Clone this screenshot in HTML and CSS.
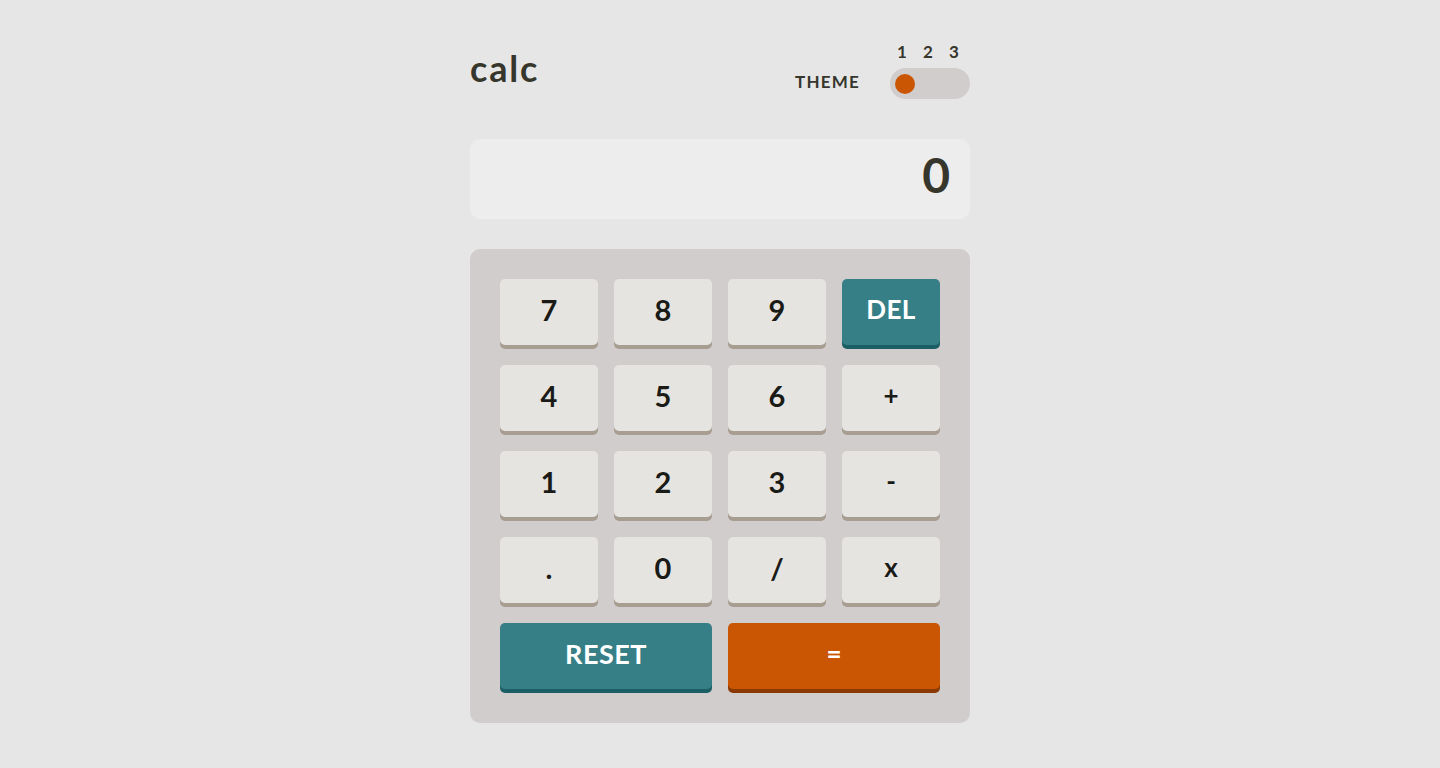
FILE: index.html
```html
<!DOCTYPE html>
<html lang="en">
<head>
<meta charset="utf-8">
<title>calc</title>
<link rel="stylesheet" href="styles.css">
</head>
<body>
<main class="calc">
  <header class="header">
    <h1 class="logo">calc</h1>
    <div class="theme">
      <span class="theme-label">THEME</span>
      <div class="switch">
        <div class="switch-nums"><span>1</span><span>2</span><span>3</span></div>
        <div class="switch-track"><span class="switch-knob"></span></div>
      </div>
    </div>
  </header>
  <section class="display">0</section>
  <section class="keypad">
    <button class="key">7</button>
    <button class="key">8</button>
    <button class="key">9</button>
    <button class="key key-alt key-small">DEL</button>
    <button class="key">4</button>
    <button class="key">5</button>
    <button class="key">6</button>
    <button class="key key-op">+</button>
    <button class="key">1</button>
    <button class="key">2</button>
    <button class="key">3</button>
    <button class="key key-op">-</button>
    <button class="key">.</button>
    <button class="key">0</button>
    <button class="key">/</button>
    <button class="key key-op">x</button>
    <button class="key key-alt key-wide key-reset">RESET</button>
    <button class="key key-eq key-wide">=</button>
  </section>
</main>
</body>
</html>
```
FILE: styles.css
```css
* { box-sizing: border-box; }
html, body { margin: 0; padding: 0; }
body {
  background: #e6e6e6;
  font-family: "Lato", "Liberation Sans", sans-serif;
  font-weight: 700;
  color: #36362c;
  height: 768px;
  overflow: hidden;
}
.calc {
  width: 500px;
  margin: 40px auto 0;
}
.header {
  display: flex;
  justify-content: space-between;
  align-items: flex-end;
  height: 59px;
}
.logo {
  margin: 0 0 13px 0;
  font-size: 36px;
  line-height: 36px;
  font-weight: 700;
  color: #36362c;
  letter-spacing: 1.8px;
}
.theme {
  display: flex;
  align-items: flex-end;
  gap: 30px;
}
.theme-label {
  font-size: 17px;
  line-height: 17px;
  letter-spacing: 1.2px;
  margin-bottom: 9px;
}
.switch {
  display: flex;
  flex-direction: column;
  width: 80px;
  gap: 10px;
}
.switch-nums {
  display: flex;
  gap: 10px;
  padding-left: 4px;
  font-size: 17px;
  line-height: 13px;
}
.switch-nums span {
  width: 16px;
  text-align: center;
}
.switch-track {
  height: 31px;
  border-radius: 16px;
  background: #d2cdcd;
  display: flex;
  align-items: center;
  padding: 0 5px;
}
.switch-knob {
  width: 20px;
  height: 20px;
  border-radius: 50%;
  background: #ca5502;
}
.display {
  margin-top: 40px;
  height: 80px;
  background: #ededed;
  border-radius: 10px;
  display: flex;
  align-items: center;
  justify-content: flex-end;
  padding: 0 20px 10px 0;
  font-size: 48px;
  color: #36362c;
}
.keypad {
  margin-top: 30px;
  background: #d2cdcd;
  border-radius: 10px;
  padding: 30px 30px 34px;
  display: grid;
  grid-template-columns: repeat(4, 98px);
  grid-auto-rows: 66px;
  column-gap: 16px;
  row-gap: 20px;
}
.key {
  border: 0;
  border-radius: 5px;
  background: #e5e4e1;
  box-shadow: 0 4px 0 #a79e91;
  font-family: inherit;
  font-weight: 700;
  font-size: 29px;
  color: #1a1a16;
  padding: 0 0 6px 0;
  display: flex;
  align-items: center;
  justify-content: center;
}
.key-op { font-size: 26px; }
.key-alt {
  background: #377f86;
  box-shadow: 0 4px 0 #1b5f65;
  color: #ffffff;
}
.key-small { font-size: 26px; letter-spacing: 0.5px; }
.key-reset { font-size: 27px; letter-spacing: 0.5px; }
.key-wide { grid-column: span 2; }
.key-eq {
  background: #ca5502;
  box-shadow: 0 4px 0 #893901;
  color: #ffffff;
  font-size: 26px;
}
```
